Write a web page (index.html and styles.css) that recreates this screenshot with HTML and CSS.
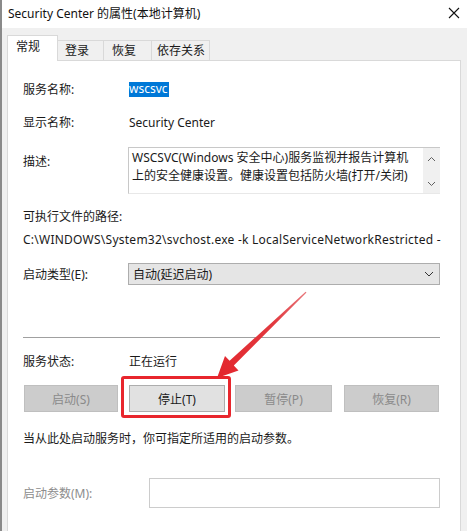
FILE: index.html
```html
<!DOCTYPE html>
<html lang="zh-CN">
<head>
<meta charset="utf-8">
<title>Security Center 的属性(本地计算机)</title>
<link rel="stylesheet" href="styles.css">
</head>
<body>
<div class="window">
  <div class="titlebar">
    <span class="title">Security Center 的属性(本地计算机)</span>
    <svg class="close" width="12" height="12" viewBox="0 0 12 12"><path d="M1 1 L11 11 M11 1 L1 11" stroke="#111" stroke-width="1.1" fill="none"/></svg>
  </div>
  <div class="body">
    <div class="tabs">
      <div class="tab active">常规</div>
      <div class="tab">登录</div>
      <div class="tab">恢复</div>
      <div class="tab">依存关系</div>
    </div>
    <div class="panel">
      <div class="row r1"><span class="label">服务名称:</span><span class="sel">wscsvc</span></div>
      <div class="row r2"><span class="label">显示名称:</span><span class="value">Security Center</span></div>
      <div class="row desc-row"><span class="label">描述:</span>
        <div class="desc">
          <div class="desc-text">WSCSVC(Windows 安全中心)服务监视并报告计算机上的安全健康设置。健康设置包括防火墙(打开/关闭)</div>
          <div class="scroll">
            <svg width="9" height="6" viewBox="0 0 9 6"><path d="M1 5 L4.5 1.5 L8 5" stroke="#606060" fill="none" stroke-width="1"/></svg>
            <svg width="9" height="6" viewBox="0 0 9 6"><path d="M1 1 L4.5 4.5 L8 1" stroke="#606060" fill="none" stroke-width="1"/></svg>
          </div>
        </div>
      </div>
      <div class="row pathlabel"><span>可执行文件的路径:</span></div>
      <div class="row path"><span>C:\WINDOWS\System32\svchost.exe -k LocalServiceNetworkRestricted -</span></div>
      <div class="row startup"><span class="label">启动类型(E):</span>
        <div class="combo"><span>自动(延迟启动)</span>
          <svg width="10" height="6" viewBox="0 0 10 6"><path d="M1 1 L5 5 L9 1" stroke="#333" fill="none" stroke-width="1"/></svg>
        </div>
      </div>
      <div class="sep"></div>
      <div class="row status"><span class="label">服务状态:</span><span class="value">正在运行</span></div>
      <div class="buttons">
        <div class="btn disabled b1">启动(S)</div>
        <div class="btn-wrap"><div class="btn">停止(T)</div></div>
        <div class="btn disabled b3">暂停(P)</div>
        <div class="btn disabled b4">恢复(R)</div>
      </div>
      <div class="row hint"><span>当从此处启动服务时，你可指定所适用的启动参数。</span></div>
      <div class="row param"><span class="label gray">启动参数(M):</span><div class="input"></div></div>
    </div>
  </div>
  <svg class="arrow" width="467" height="531" viewBox="0 0 467 531">
    <defs>
      <linearGradient id="ag" x1="306" y1="292" x2="217" y2="377" gradientUnits="userSpaceOnUse">
        <stop offset="0" stop-color="#e8767a"/>
        <stop offset="0.35" stop-color="#e23a40"/>
        <stop offset="1" stop-color="#e3262d"/>
      </linearGradient>
    </defs>
    <polygon fill="url(#ag)" points="306.5,292.5 233.8,365.6 238.5,370.5 217,378 225,356 229.6,360.8 305.6,291.8"/>
  </svg>
</div>
</body>
</html>
```
FILE: styles.css
```css
html, body {
  margin: 0;
  padding: 0;
}
body {
  width: 467px;
  height: 531px;
  overflow: hidden;
  font-family: "Noto Sans", "Noto Sans CJK SC", sans-serif;
  font-size: 12px;
  color: #1a1a1a;
}
.window {
  position: relative;
  width: 467px;
  height: 531px;
  background: #f0f0f0;
  box-sizing: border-box;
  border-left: 2px solid #8a8a8a;
}
.titlebar {
  height: 28px;
  background: #fff;
  display: flex;
  align-items: center;
  justify-content: space-between;
  padding: 0 7px 2px 6px;
  box-sizing: border-box;
}
.title {
  font-size: 12px;
  color: #111;
}
.body {
  padding-left: 5px;
}
.tabs {
  display: flex;
  align-items: flex-end;
  height: 32px;
}
.tab {
  height: 20px;
  line-height: 19px;
  padding: 0 0 0 6px;
  border: 1px solid #d9d9d9;
  border-bottom: none;
  border-left: none;
  box-sizing: border-box;
  background: #f0f0f0;
  white-space: nowrap;
}
.tab:nth-child(2) { width: 46px; padding-left: 7px; }
.tab:nth-child(3) { width: 48px; padding-left: 8px; }
.tab:nth-child(4) { width: 58px; padding-left: 5px; }
.tab.active {
  width: 51px;
  height: 26px;
  line-height: 22px;
  padding-left: 8px;
  background: #fff;
  border-left: 1px solid #d9d9d9;
  margin-bottom: -1px;
  position: relative;
  z-index: 1;
}
.panel {
  width: 454px;
  height: 480px;
  box-sizing: border-box;
  background: #fff;
  border: 1px solid #d9d9d9;
  border-bottom: none;
  padding: 20px 20px 0 15px;
}
.row {
  display: flex;
  align-items: center;
  height: 16px;
}
.label {
  width: 106px;
  flex: none;
}
.r2 { margin-top: 17px; }
.sel {
  background: #0078d7;
  color: #fff;
  padding: 0 1px 0 0;
  height: 15px;
  line-height: 14px;
}
.desc-row {
  margin-top: 17px;
  height: 47px;
  align-items: flex-start;
}
.desc-row .label {
  margin-top: 5px;
  width: 105px;
}
.desc {
  flex: 1;
  height: 47px;
  display: flex;
  border: 1px solid #c8c8c8;
  border-right: none;
  border-bottom-color: #e8e8e8;
  box-sizing: border-box;
}
.desc-text {
  flex: 1;
  padding: 1px 4px 0 3px;
  line-height: 18px;
  overflow: hidden;
}
.scroll {
  width: 17px;
  background: #f0f0f0;
  display: flex;
  flex-direction: column;
  align-items: center;
  justify-content: space-between;
  padding: 8px 0 6px;
  box-sizing: border-box;
}
.pathlabel { margin-top: 14px; }
.path {
  margin-top: 7px;
  white-space: nowrap;
  letter-spacing: 0.25px;
}
.startup {
  margin-top: 16px;
  height: 22px;
}
.startup .label { width: 105px; }
.combo {
  flex: 1;
  height: 22px;
  background: #e5e5e5;
  border: 1px solid #adadad;
  box-sizing: border-box;
  display: flex;
  align-items: center;
  justify-content: space-between;
  padding: 0 5px 0 4px;
}
.sep {
  margin-top: 52px;
  height: 1px;
  background: #a0a0a0;
  width: 417px;
}
.status { margin-top: 15px; }
.buttons {
  margin-top: 16px;
  display: flex;
  height: 27px;
  margin-left: 1px;
}
.btn {
  height: 27px;
  box-sizing: border-box;
  border: 1px solid #adadad;
  background: #e1e1e1;
  display: flex;
  align-items: center;
  justify-content: center;
  width: 96px;
}
.btn.disabled {
  background: #cccccc;
  border-color: #bfbfbf;
  color: #8a8a8a;
}
.b1 { width: 94px; margin-right: 11px; }
.btn-wrap {
  position: relative;
  margin-right: 10px;
}
.btn-wrap::after {
  content: "";
  position: absolute;
  left: -8px;
  top: -9px;
  right: -6px;
  bottom: -6px;
  border: 3px solid #e8262d;
  border-radius: 3px;
}
.b3 { width: 97px; margin-right: 12px; }
.b4 { width: 95px; }
.hint { margin-top: 18px; }
.param {
  margin-top: 32px;
  height: 30px;
}
.param .label { width: 126px; }
.gray { color: #8d8d8d; }
.input {
  flex: 1;
  height: 30px;
  box-sizing: border-box;
  border: 1px solid #cccccc;
}
.arrow {
  position: absolute;
  left: -2px;
  top: 0;
  pointer-events: none;
}
```
